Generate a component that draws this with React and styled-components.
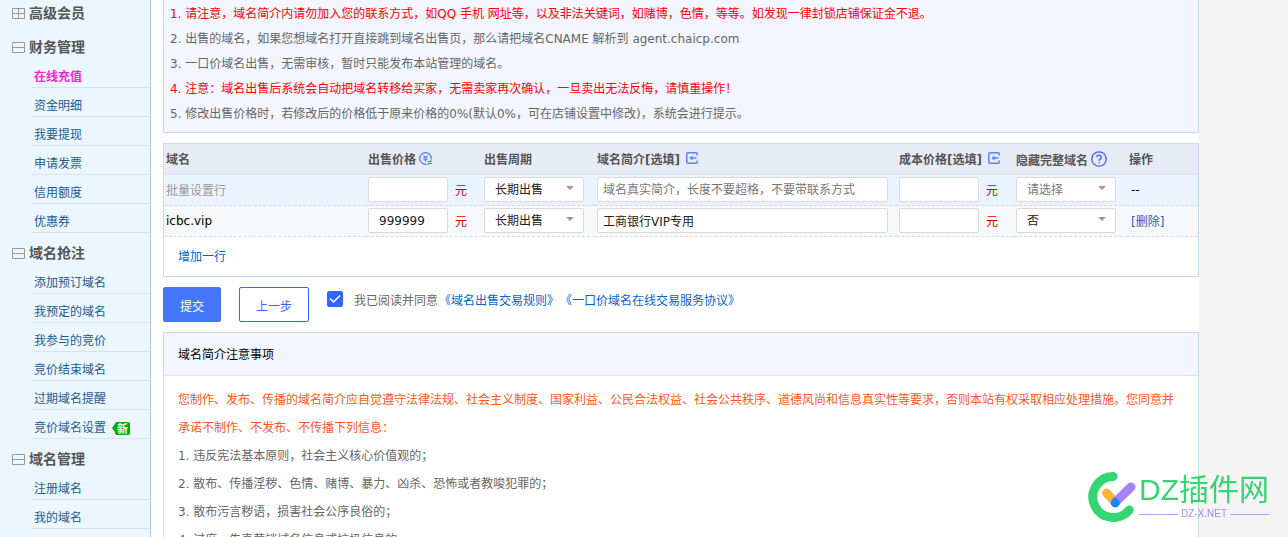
import React, { useState } from "react";
import styled, { createGlobalStyle } from "styled-components";

const GlobalStyle = createGlobalStyle`
  *,
  *::before,
  *::after {
    box-sizing: border-box;
  }

  body {
    background-color: #f4f4f4;
    color: #666666;
    font-family: "DejaVu Sans", "Noto Sans CJK SC", sans-serif;
    font-size: 12px;
    margin: 0;
  }

  button,
  input,
  select {
    font: inherit;
  }

  a {
    color: #0066cc;
    text-decoration: none;
  }
`;

const Page = styled.div`
  display: flex;
  height: 100vh;
  overflow: hidden;
  padding-right: 89px;
`;

const Sidebar = styled.nav`
  background-color: #ebf6ff;
  border-right: 1px solid #a9c9e2;
  flex: 0 0 151px;
  padding-top: 4px;
`;

const Group = styled.section`
  padding-bottom: ${({ $collapsed }) => ($collapsed ? "2px" : "0")};

  & + & {
    margin-top: 11px;
  }
`;

const GroupTitle = styled.h2`
  align-items: center;
  color: #555555;
  display: flex;
  font-size: 14px;
  gap: 4px;
  line-height: 18px;
  margin: 0 0 3px 12px;
`;

const GroupItems = styled.ul`
  list-style: none;
  margin: 0 0 0 32px;
  padding: 0;
`;

const GroupItem = styled.li`
  align-items: center;
  border-bottom: 1px solid #dae3ec;
  display: flex;
  gap: 9px;
  line-height: 19px;
  padding: 9px 0 0 2px;
`;

const ItemLink = styled.a`
  color: ${({ $active }) => ($active ? "#f024d0" : "#245a8f")};
  font-weight: ${({ $active }) => ($active ? "bold" : "normal")};
`;

const NewBadge = styled.span`
  background-color: #00a800;
  border-radius: 2px;
  color: white;
  font-family: "Noto Sans CJK SC", sans-serif;
  font-size: 11px;
  font-weight: bold;
  line-height: 13px;
  padding: 0 2px;
  position: relative;

  &::before {
    border: 4px solid transparent;
    border-left: 0;
    border-right: 3px solid #00a800;
    content: "";
    left: -3px;
    position: absolute;
    top: 2px;
  }
`;

const Main = styled.main`
  background-color: white;
  display: flex;
  flex: 1;
  flex-direction: column;
  gap: 10px;
  min-width: 0;
  padding-left: 12px;
`;

const Notice = styled.ol`
  background-color: #f3f6fe;
  border: 1px solid #c4daf0;
  border-top: 0;
  line-height: 25px;
  list-style: none;
  margin: 0;
  padding: 2px 6px 5px;
`;

const NoticeItem = styled.li`
  color: ${({ $warning }) => ($warning ? "#ff0000" : "inherit")};
`;

const Panel = styled.section`
  border: 1px solid #c4daf0;
`;

const Table = styled.table`
  border-spacing: 0;
  table-layout: fixed;
  width: 100%;
`;

const Column = styled.col`
  width: ${({ $width }) => $width};
`;

const HeadCell = styled.th`
  background-color: #e6ebf5;
  border-bottom: 1px solid #e4e4e4;
  color: #555555;
  height: 31px;
  padding: 0 0 ${({ $low }) => ($low ? "0" : "2px")} 2px;
  text-align: left;
  white-space: nowrap;
`;

const HeadLabel = styled.span`
  align-items: center;
  display: flex;
  gap: ${({ $gap }) => $gap || "3px"};
`;

const Row = styled.tr`
  background-color: ${({ $bulk }) => ($bulk ? "#ebf4fe" : "#f7f8fa")};
  color: ${({ $bulk }) => ($bulk ? "#999999" : "#000000")};
`;

const Cell = styled.td`
  border-bottom: 1px dashed #d9d9d9;
  padding: 2px 0 3px 2px;
`;

const DescriptionCell = styled(Cell)`
  padding-right: 9px;
`;

const ActionCell = styled(Cell)`
  color: #000000;
  padding-left: 4px;
`;

const Field = styled.div`
  align-items: center;
  display: flex;
  gap: 7px;
`;

const Unit = styled.span`
  color: #cc0000;
`;

const TextInput = styled.input`
  background-color: white;
  border: 1px solid #d9d9d9;
  border-radius: 2px;
  color: #222222;
  display: block;
  height: 25px;
  outline: none;
  padding: 0 5px;
  width: 100%;

  &::placeholder {
    color: #777777;
  }
`;

const PriceInput = styled(TextInput)`
  padding: 0 10px;
  width: 80px;
`;

const SelectWrapper = styled.div`
  position: relative;
  width: 100px;

  &::after {
    border: 4px solid transparent;
    border-bottom: 0;
    border-top-color: #999999;
    content: "";
    pointer-events: none;
    position: absolute;
    right: 10px;
    top: 9px;
  }
`;

const Select = styled.select`
  appearance: none;
  background-color: white;
  border: 1px solid #d9d9d9;
  border-radius: 2px;
  color: ${({ $empty }) => ($empty ? "#777777" : "#222222")};
  display: block;
  height: 25px;
  outline: none;
  padding: 1px 10px 0;
  width: 100%;
`;

const PlainButton = styled.button`
  background: none;
  border: 0;
  color: ${({ $dark }) => ($dark ? "#1f5fc4" : "#0066cc")};
  cursor: pointer;
  padding: 0;
`;

const AddRow = styled.div`
  line-height: 37px;
  padding: 2px 14px 0;
`;

const Actions = styled.form`
  align-items: center;
  display: flex;
  gap: 18px;
`;

const Button = styled.button`
  background-color: ${({ $primary }) => ($primary ? "#4477f7" : "white")};
  border: 1px solid ${({ $primary }) => ($primary ? "#4477f7" : "#3366ff")};
  border-radius: 2px;
  color: ${({ $primary }) => ($primary ? "white" : "#3366ff")};
  cursor: pointer;
  height: 35px;
  padding: 2px 16px 0;
`;

const Agreement = styled.div`
  align-items: center;
  align-self: flex-start;
  display: flex;
  gap: 1px;
  height: 24px;
`;

const AgreementLabel = styled.label`
  align-items: center;
  display: flex;
  gap: 11px;
`;

const CheckWrapper = styled.span`
  display: grid;

  & > * {
    grid-area: 1 / 1;
  }

  svg {
    pointer-events: none;
  }
`;

const Checkbox = styled.input`
  appearance: none;
  background-color: white;
  border: 1px solid #3366ff;
  border-radius: 2px;
  height: 16px;
  margin: 0;
  width: 16px;

  &:checked {
    background-color: #3366ff;
  }
`;

const PanelTitle = styled.h3`
  background-color: #f3f6fe;
  border-bottom: 1px solid #dbe6f5;
  color: #000000;
  font-size: 12px;
  font-weight: normal;
  line-height: 40px;
  margin: 0;
  padding: 2px 14px 0;
`;

const Rules = styled.div`
  line-height: 28px;
  padding: 10px 14px;
`;

const RulesIntro = styled.p`
  color: #ff5722;
  margin: 0;
`;

const RulesList = styled.ol`
  list-style: none;
  margin: 0;
  padding: 0;
`;

const Watermark = styled.div`
  bottom: 15px;
  display: flex;
  gap: 1px;
  pointer-events: none;
  position: fixed;
  right: 19px;
`;

const WatermarkText = styled.div`
  display: flex;
  flex-direction: column;
`;

const WatermarkName = styled.span`
  color: #34d673;
  font-family: "Liberation Sans", "Noto Sans CJK SC", sans-serif;
  font-size: 30px;
  line-height: 36px;
`;

const WatermarkSite = styled.span`
  align-items: center;
  color: #a98bf8;
  display: flex;
  font-family: "Liberation Sans", sans-serif;
  font-size: 10px;
  gap: 3px;
  line-height: 12px;

  &::before,
  &::after {
    background-color: #b79cfa;
    content: "";
    flex: 1;
    height: 1px;
  }
`;

const ToggleIcon = ({ collapsed }) => (
  <svg width="13" height="11" fill="none" stroke="#999999">
    <path d="M.5.5h12v10H.5zM.5 5.5h12" />
    {collapsed ? <path d="M6.5.5v10" /> : null}
  </svg>
);

const PriceIcon = () => (
  <svg width="13" height="13" fill="none" stroke="#4a76fb">
    <path d="M7.5 12.2A5.8 5.8 0 1 1 12.2 7.5" strokeWidth="1.2" />
    <path d="M4.3 3.2 6.4 5.5l2.1-2.3M6.4 5.500V9.500M4.300 5.700h4.200M4.300 7.700h4.200" />
    <path d="M8.500 9.500h4L11.300 8.200M12.800 11.500h-4l1.200 1.300" />
  </svg>
);

const FillIcon = () => (
  <svg width="12" height="12" fill="none" stroke="#5b83fb" strokeWidth="1.5">
    <path d="M11.2 3.5V1.8a1 1 0 0 0-1-1H1.800a1 1 0 0 0-1 1v8.400a1 1 0 0 0 1 1h8.400a1 1 0 0 0 1-1V8.500" />
    <path d="M10.500 6h-6" />
    <path d="M6.500 3.500v5L3.500 6z" fill="#5b83fb" stroke="none" />
  </svg>
);

const HelpIcon = () => (
  <svg width="16" height="16" fill="none" stroke="#3f5ffb" strokeWidth="1.3">
    <circle cx="8" cy="8" r="7.2" />
    <path d="M5.800 6.300a2.200 2.200 0 1 1 3.400 1.800C8.300 8.700 8 9 8 10M8 11.200v1.300" />
  </svg>
);

const CheckIcon = () => (
  <svg width="16" height="16" fill="none" stroke="white" strokeWidth="1.5">
    <path d="M3 7.500 6.500 11 13 4.500" />
  </svg>
);

const WatermarkLogo = () => (
  <svg width="50" height="50" fill="none" strokeLinecap="round" strokeWidth="9">
    <path d="M25 4.500A20.500 20.500 0 1 0 41.200 38" stroke="#34d673" />
    <path d="M18.500 21 27 30" stroke="#ffb53c" />
    <path d="M43 15 27.500 30" stroke="#a682fb" />
    <path
      d="M27.300 25.200 31.500 29.500A4.500 4.500 0 1 1 23.500 28.500Z"
      fill="#1684fc"
    />
  </svg>
);

const groups = [
  { title: "高级会员", items: [] },
  {
    title: "财务管理",
    items: [
      "在线充值",
      "资金明细",
      "我要提现",
      "申请发票",
      "信用额度",
      "优惠券"
    ]
  },
  {
    title: "域名抢注",
    items: [
      "添加预订域名",
      "我预定的域名",
      "我参与的竞价",
      "竞价结束域名",
      "过期域名提醒",
      "竞价域名设置"
    ]
  },
  { title: "域名管理", items: ["注册域名", "我的域名"] }
];

const notices = [
  {
    text:
      "1. 请注意，域名简介内请勿加入您的联系方式，如QQ 手机 网址等，以及非法关键词，如赌博，色情，等等。如发现一律封锁店铺保证金不退。",
    warning: true
  },
  {
    text:
      "2. 出售的域名，如果您想域名打开直接跳到域名出售页，那么请把域名CNAME 解析到 agent.chaicp.com"
  },
  { text: "3. 一口价域名出售，无需审核，暂时只能发布本站管理的域名。" },
  {
    text:
      "4. 注意：域名出售后系统会自动把域名转移给买家，无需卖家再次确认，一旦卖出无法反悔，请慎重操作！",
    warning: true
  },
  {
    text:
      "5. 修改出售价格时，若修改后的价格低于原来价格的0%(默认0%，可在店铺设置中修改)，系统会进行提示。"
  }
];

const rules = [
  "1. 违反宪法基本原则，社会主义核心价值观的；",
  "2. 散布、传播淫秽、色情、赌博、暴力、凶杀、恐怖或者教唆犯罪的；",
  "3. 散布污言秽语，损害社会公序良俗的；",
  "4. 过度、失真营销域名信息或垃圾信息的。"
];

const columns = ["202px", "116px", "113px", "auto", "117px", "113px", "71px"];

const DomainRow = ({ bulk, name, price, description, hidden }) => (
  <Row $bulk={bulk}>
    <Cell>{name}</Cell>
    <Cell>
      <Field>
        <PriceInput aria-label="出售价格" defaultValue={price} />
        <Unit>元</Unit>
      </Field>
    </Cell>
    <Cell>
      <SelectWrapper>
        <Select aria-label="出售周期">
          <option>长期出售</option>
        </Select>
      </SelectWrapper>
    </Cell>
    <DescriptionCell>
      <TextInput
        aria-label="域名简介"
        defaultValue={description}
        placeholder="域名真实简介，长度不要超格，不要带联系方式"
      />
    </DescriptionCell>
    <Cell>
      <Field>
        <PriceInput aria-label="成本价格" />
        <Unit>元</Unit>
      </Field>
    </Cell>
    <Cell>
      <SelectWrapper>
        <Select $empty={bulk} aria-label="隐藏完整域名" defaultValue={hidden}>
          <option>请选择</option>
          <option>是</option>
          <option>否</option>
        </Select>
      </SelectWrapper>
    </Cell>
    <ActionCell>
      {bulk ? (
        "--"
      ) : (
        <PlainButton $dark type="button">
          [删除]
        </PlainButton>
      )}
    </ActionCell>
  </Row>
);

const App = () => {
  const [agreed, setAgreed] = useState(true);

  return (
    <Page>
      <GlobalStyle />
      <Sidebar>
        {groups.map(({ title, items }) => (
          <Group $collapsed={!items.length} key={title}>
            <GroupTitle>
              <ToggleIcon collapsed={!items.length} />
              {title}
            </GroupTitle>
            <GroupItems>
              {items.map(item => (
                <GroupItem key={item}>
                  <ItemLink $active={item === "在线充值"} href="#">
                    {item}
                  </ItemLink>
                  {item === "竞价域名设置" ? <NewBadge>新</NewBadge> : null}
                </GroupItem>
              ))}
            </GroupItems>
          </Group>
        ))}
      </Sidebar>
      <Main>
        <Notice>
          {notices.map(({ text, warning }) => (
            <NoticeItem $warning={warning} key={text}>
              {text}
            </NoticeItem>
          ))}
        </Notice>

        <Panel>
          <Table>
            <colgroup>
              {columns.map((width, index) => (
                <Column $width={width} key={index} />
              ))}
            </colgroup>
            <thead>
              <tr>
                <HeadCell>域名</HeadCell>
                <HeadCell>
                  <HeadLabel>
                    出售价格
                    <PriceIcon />
                  </HeadLabel>
                </HeadCell>
                <HeadCell>出售周期</HeadCell>
                <HeadCell>
                  <HeadLabel $gap="6px">
                    域名简介[选填]
                    <FillIcon />
                  </HeadLabel>
                </HeadCell>
                <HeadCell>
                  <HeadLabel $gap="6px">
                    成本价格[选填]
                    <FillIcon />
                  </HeadLabel>
                </HeadCell>
                <HeadCell $low>
                  <HeadLabel>
                    隐藏完整域名
                    <HelpIcon />
                  </HeadLabel>
                </HeadCell>
                <HeadCell>操作</HeadCell>
              </tr>
            </thead>
            <tbody>
              <DomainRow bulk hidden="请选择" name="批量设置行" />
              <DomainRow
                description="工商银行VIP专用"
                hidden="否"
                name="icbc.vip"
                price="999999"
              />
            </tbody>
          </Table>
          <AddRow>
            <PlainButton type="button">增加一行</PlainButton>
          </AddRow>
        </Panel>

        <Actions onSubmit={event => event.preventDefault()}>
          <Button $primary disabled={!agreed} type="submit">
            提交
          </Button>
          <Button type="button">上一步</Button>
          <Agreement>
            <AgreementLabel>
              <CheckWrapper>
                <Checkbox
                  checked={agreed}
                  onChange={event => setAgreed(event.target.checked)}
                  type="checkbox"
                />
                <CheckIcon />
              </CheckWrapper>
              我已阅读并同意
            </AgreementLabel>
            <a href="#">《域名出售交易规则》</a>
            <a href="#">《一口价域名在线交易服务协议》</a>
          </Agreement>
        </Actions>

        <Panel>
          <PanelTitle>域名简介注意事项</PanelTitle>
          <Rules>
            <RulesIntro>
              您制作、发布、传播的域名简介应自觉遵守法律法规、社会主义制度、国家利益、公民合法权益、社会公共秩序、道德风尚和信息真实性等要求，否则本站有权采取相应处理措施。您同意并承诺不制作、不发布、不传播下列信息：
            </RulesIntro>
            <RulesList>
              {rules.map(rule => (
                <li key={rule}>{rule}</li>
              ))}
            </RulesList>
          </Rules>
        </Panel>
      </Main>
      <Watermark>
        <WatermarkLogo />
        <WatermarkText>
          <WatermarkName>DZ插件网</WatermarkName>
          <WatermarkSite>DZ-X.NET</WatermarkSite>
        </WatermarkText>
      </Watermark>
    </Page>
  );
};

export default App;
